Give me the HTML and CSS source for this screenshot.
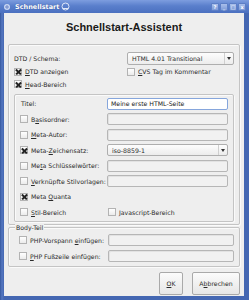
FILE: index.html
```html
<!DOCTYPE html>
<html>
<head>
<meta charset="utf-8">
<link rel="stylesheet" href="styles.css">
</head>
<body>
<div class="win">
  <div class="titlebar">
    <svg class="appicon" width="8" height="8" viewBox="0 0 8 8"><circle cx="4" cy="4" r="3" fill="#c9d6f2"/><path d="M2 4h4M4 2v4" stroke="#6c86c8" stroke-width="1"/></svg>
    <span class="ttext">Schnellstart</span>
    <svg class="pin" width="9" height="9" viewBox="0 0 9 9"><circle cx="4.5" cy="4.5" r="3.5" fill="none" stroke="#dfe7f8" stroke-width="1"/><path d="M2 6.5h5" stroke="#dfe7f8"/></svg>
    <div class="tbtns">
      <span class="tb">?</span><span class="tb">_</span><span class="tb">□</span><span class="tb">x</span>
    </div>
  </div>
  <div class="client">
    <h1 class="heading">Schnellstart-Assistent</h1>
    <div class="group g1">
      <div class="row2">
        <span class="lbl">DTD / Schema:</span>
        <div class="combo"><span>HTML 4.01 Transitional</span><span class="arrow"></span></div>
      </div>
      <div class="row2">
        <span class="cb"><span class="box on"></span><span><u>D</u>TD anzeigen</span></span>
        <span class="cb"><span class="box"></span><span><u>C</u>VS Tag im Kommentar</span></span>
      </div>
      <div class="row2">
        <span class="cb"><span class="box on"></span><span><u>H</u>ead-Bereich</span></span>
      </div>
      <div class="group g2">
        <div class="form">
          <span class="lbl plain">Titel:</span>
          <div class="input focus">Meine erste HTML-Seite</div>
          <span class="cb"><span class="box"></span><span>B<u>a</u>sisordner:</span></span>
          <div class="input"></div>
          <span class="cb"><span class="box"></span><span><u>M</u>eta-Autor:</span></span>
          <div class="input"></div>
          <span class="cb"><span class="box on"></span><span>Meta-<u>Z</u>eichensatz:</span></span>
          <div class="combo light"><span>iso-8859-1</span><span class="arrow"></span></div>
          <span class="cb"><span class="box"></span><span>Me<u>t</u>a Schlüsselwörter:</span></span>
          <div class="input"></div>
          <span class="cb"><span class="box"></span><span><u>V</u>erknüpfte Stilvorlagen:</span></span>
          <div class="input"></div>
          <span class="cb full"><span class="box on"></span><span>Meta <u>Q</u>uanta</span></span>
          <span class="cb"><span class="box"></span><span><u>S</u>til-Bereich</span></span>
          <span class="cb js"><span class="box"></span><span><u>J</u>avascript-Bereich</span></span>
        </div>
      </div>
    </div>
    <div class="group g3">
      <span class="legend">Body-Teil</span>
      <div class="form body">
        <span class="cb"><span class="box"></span><span>PHP-Vorspann <u>e</u>infügen:</span></span>
        <div class="input"></div>
        <span class="cb"><span class="box"></span><span><u>P</u>HP Fußzeile einfügen:</span></span>
        <div class="input"></div>
      </div>
    </div>
    <div class="buttons">
      <span class="btn ok"><u>O</u>K</span>
      <span class="btn cancel">A<u>b</u>brechen</span>
    </div>
  </div>
</div>
</body>
</html>
```

FILE: styles.css
```css
* { box-sizing: border-box; }
html, body { margin: 0; padding: 0; }
body {
  width: 249px;
  height: 300px;
  overflow: hidden;
  background: #3a5ea8;
  font-family: "DejaVu Sans", sans-serif;
  font-size: 6.2px;
  color: #2a2a2a;
}
.win {
  width: 249px;
  height: 300px;
  display: flex;
  flex-direction: column;
  background: linear-gradient(90deg, #36589f 0, #5577c0 2px, #4467b2 4px);
}
.titlebar {
  height: 13px;
  flex: none;
  display: flex;
  align-items: center;
  padding: 0 3px 0 3px;
  background: linear-gradient(180deg, #7d9ddf 0%, #5a7fcc 45%, #4b70c0 100%);
  color: #fff;
}
.appicon { flex: none; margin-right: 4px; }
.ttext {
  font-family: "DejaVu Sans", sans-serif;
  font-weight: bold;
  font-size: 6.5px;
  color: #fff;
  text-shadow: 0 0 1px #2d4c90;
}
.pin { margin-left: 2px; }
.tbtns {
  margin-left: auto;
  display: flex;
  gap: 1px;
}
.tb {
  width: 8px;
  height: 8px;
  border-radius: 1px;
  background: linear-gradient(180deg, #a9bfeb, #7e9bd8);
  border: 1px solid #5d7fc6;
  color: #fff;
  font-size: 5px;
  line-height: 6px;
  text-align: center;
  font-weight: bold;
}
.client {
  flex: 1;
  margin: 0 5px 4px 4px;
  background: #eeeeee;
  display: flex;
  flex-direction: column;
  padding: 0 4px;
}
.heading {
  margin: 7px 0 10px;
  font-family: "Liberation Sans", sans-serif;
  font-weight: bold;
  font-size: 11px;
  line-height: 14px;
  text-align: center;
  color: #1a1a1a;
}
.group {
  border: 1px solid #c4c4c4;
  border-radius: 2px;
  box-shadow: inset 1px 1px 0 #fafafa, 1px 1px 0 #fafafa;
}
.g1 {
  padding: 7px 5px 2px;
}
.row2 {
  display: grid;
  grid-template-columns: 113px 1fr;
  align-items: center;
  height: 12.5px;
}
.row2:first-child { height: 13px; margin-bottom: 0.5px; }
.lbl { white-space: nowrap; }
.combo {
  height: 13px;
  border: 1px solid #aeaeae;
  border-radius: 2px;
  background: linear-gradient(180deg, #fdfdfd, #ececec);
  display: flex;
  align-items: center;
  padding-left: 4px;
}
.combo span:first-child { flex: 1; }
.arrow {
  width: 9px;
  height: 100%;
  border-left: 1px solid #cfcfcf;
  position: relative;
}
.arrow::after {
  content: "";
  position: absolute;
  left: 2px;
  top: 4px;
  border-left: 2px solid transparent;
  border-right: 2px solid transparent;
  border-top: 3px solid #333;
}
.cb {
  display: flex;
  align-items: center;
  white-space: nowrap;
}
.box {
  width: 8px;
  height: 8px;
  flex: none;
  border: 1px solid #b3b3b3;
  background: linear-gradient(180deg, #ffffff, #ebebeb);
  margin-right: 3px;
  position: relative;
}
.box.on::before, .box.on::after {
  content: "";
  position: absolute;
  left: -0.5px;
  top: 2.5px;
  width: 7px;
  height: 1.6px;
  background: #222;
  transform: rotate(45deg);
}
.box.on::after { transform: rotate(-45deg); }
.g2 {
  margin: 3px 0 0;
  padding: 3px 5px 3px 6px;
}
.form {
  display: grid;
  grid-template-columns: 86px 1fr;
  grid-auto-rows: 12.4px;
  row-gap: 3.1px;
  align-items: center;
}
.form .cb { margin-left: -1px; }
.full { grid-column: 1 / span 2; }
.js { margin-left: 1px !important; }
.input {
  height: 12px;
  border: 1px solid #b6b6b6;
  border-radius: 2px;
  background: #f1f1f1;
  box-shadow: inset 1px 1px 0 #e2e2e2;
  display: flex;
  align-items: center;
  padding-left: 3px;
  color: #1a1a1a;
}
.input.focus {
  border-color: #86a6dc;
  background: #fff;
  box-shadow: none;
}
.combo.light { height: 12px; }
.g3 {
  margin-top: 2px;
  position: relative;
  padding: 6px 5px 3px 11px;
}
.legend {
  position: absolute;
  top: -5px;
  left: 6px;
  padding: 0 1px;
  background: #eeeeee;
  line-height: 9px;
}
.form.body {
  grid-template-columns: 88px 1fr;
  row-gap: 3.5px;
}
.buttons {
  display: flex;
  justify-content: flex-end;
  gap: 9px;
  margin-top: 5px;
}
.btn {
  height: 23px;
  border: 1px solid #a9a9a9;
  border-radius: 2px;
  background: linear-gradient(180deg, #fbfbfb, #e6e6e6);
  display: flex;
  align-items: center;
  justify-content: center;
}
.ok { width: 24px; }
.cancel { width: 48px; }
```
